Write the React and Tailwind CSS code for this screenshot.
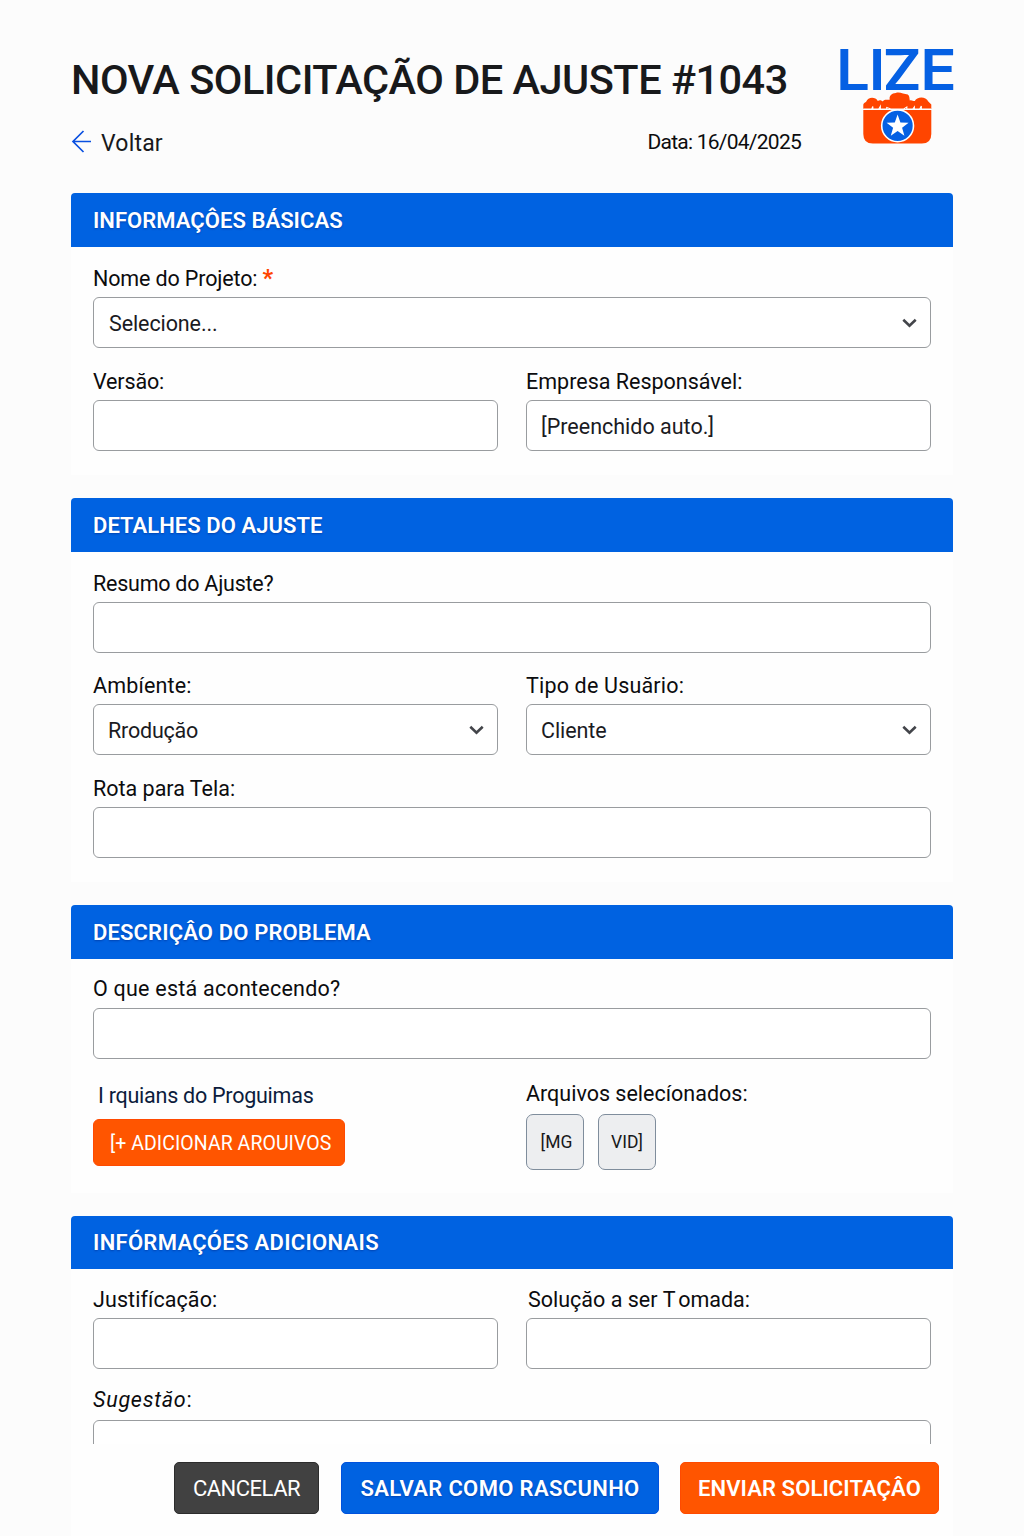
import React from "react";

function Logo() {
  return (
    <svg width="116" height="97" viewBox="0 0 116 97" className="block overflow-visible">
      <text
        x="-1 29.5 42.2 77.2"
        y="41.5"
        transform="scale(1.08 1)"
        fill="#0560e3"
        className="font-['Inter',sans-serif] text-[55.7px] font-semibold"
      >
        LIZE
      </text>
      <g transform="translate(25.8 44)">
        <path
          d="M0.5 17 V12.5 C1 10.5 2.5 11 3.5 9.5 C5 4.5 13 4.5 15 9 C17 7.5 19 8.5 20 9.5 C22 6.5 25 8.5 27 7.5 C26 4 29 1 33 1 C37 -0.5 41 2.5 45 2.5 C47 4 46.5 6 47 8.5 C49 7.5 50.5 9.5 52 9 C54 4.5 63 4 65.5 9.5 L68.5 12.5 V17 Z"
          fill="#ff4500"
        />
        <path d="M0.5 18 H68.5 V42 Q68.5 51.5 59 51.5 H10 Q0.5 51.5 0.5 42 Z" fill="#ff4500" />
        <path
          d="M0.5 17 H9 L10 14.5 V17 H16 L17.5 14.5 V17 H24 V15.5 L28 17 H41 L44 15 V17 H50 L51.5 15 V17 H57 L58.5 14 V17 H68.5"
          fill="none"
          stroke="#fff"
          strokeWidth="1.2"
        />
        <circle cx="34.8" cy="33.8" r="15.9" fill="#0560e3" stroke="#fff" strokeWidth="1.6" />
        <path d="M34.8 22.5 L37.6 30.5 L45.8 30.7 L39.3 35.7 L41.6 43.8 L34.8 39 L28 43.8 L30.3 35.7 L23.8 30.7 L32 30.5 Z" fill="#fff" />
      </g>
    </svg>
  );
}

function Section({ title, titleClass, headClass = "h-[54px]", className, children }) {
  return (
    <section className={`bg-[#fefefe] ${className}`}>
      <h2
        className={`flex items-center rounded-t-[4px] bg-[#0062e1] px-[22px] text-[22px] font-semibold text-white [text-shadow:0_1px_2px_rgba(0,30,120,0.45)] ${headClass}`}
      >
        <span className={titleClass}>{title}</span>
      </h2>
      <div className="px-[22px]">{children}</div>
    </section>
  );
}

function Label({ className = "", color = "text-[#0c0c0e]", leading = "leading-[26px]", children }) {
  return <label className={`block h-6 text-[21.5px] whitespace-nowrap ${leading} ${color} ${className}`}>{children}</label>;
}

function Field({ textClass = "", select, children }) {
  return (
    <div className="flex h-[51px] items-center justify-between rounded-[6px] border border-[#999c9f] bg-white pr-[13px] pl-[14px] text-[21.5px] text-[#1b1b1f]">
      <span className={`pt-[3px] whitespace-nowrap ${textClass}`}>{children}</span>
      {select && (
        <svg width="15" height="10" viewBox="0 0 15 10" className="block">
          <path d="M1.3 1.8 L7.5 7.8 L13.7 1.8" fill="none" stroke="#43454a" strokeWidth="2.6" />
        </svg>
      )}
    </div>
  );
}

export default function App() {
  return (
    <div className="h-[1536px] w-[1024px] overflow-hidden bg-[#fcfcfc] pr-[71px] pl-[71px] font-['Roboto',sans-serif] text-[#18191b]">
      <header className="flex h-[193px] justify-between">
        <div className="w-[730px] pt-[56px]">
          <h1 className="h-12 text-[41.5px] leading-[48px] font-medium tracking-[-0.5px] whitespace-nowrap">
            NOVA SOLICITAÇÃO DE AJUSTE #1043
          </h1>
          <div className="mt-[26px] flex h-6 items-center justify-between">
            <a className="flex items-center gap-[9px] text-[23px] leading-6">
              <svg width="21" height="24" viewBox="0 0 21 24" className="block">
                <path d="M12.5 1 L2 11.5 L12.5 22 M2 11.5 H20" fill="none" stroke="#0a50e0" strokeWidth="1.7" />
              </svg>
              <span className="pt-[3px] tracking-[0.2px]">Voltar</span>
            </a>
            <span className="text-[21px] leading-6 tracking-[-0.75px] text-[#0c0c0e]">Data: 16/04/2025</span>
          </div>
        </div>
        <div className="pt-[48px]">
          <Logo />
        </div>
      </header>

      <main>
        <Section title="INFORMAÇÔES BÁSICAS" titleClass="tracking-[0.04px]" className="h-[282px]">
          <Label className="mt-[19px] mb-[7px] tracking-[-0.14px]">
            Nome do Projeto: <span className="text-[23px] font-extrabold text-[#ff4500]">*</span>
          </Label>
          <Field select textClass="pl-px tracking-[-0.1px]">Selecione...</Field>
          <div className="grid grid-cols-2 gap-x-7 pt-[21px]">
            <div>
              <Label className="mb-[7px] tracking-[-0.15px]">Versăo:</Label>
              <Field />
            </div>
            <div>
              <Label className="mb-[7px]">Empresa Responsável:</Label>
              <Field>[Preenchido auto.]</Field>
            </div>
          </div>
        </Section>

        <Section title="DETALHES DO AJUSTE" titleClass="tracking-[0.05px]" className="mt-[23px] h-[384px]">
          <Label className="mt-[19px] mb-[7px] tracking-[-0.24px]">Resumo do Ajuste?</Label>
          <Field />
          <div className="grid grid-cols-2 gap-x-7 pt-[21px]">
            <div>
              <Label leading="leading-6" className="mb-[6px] tracking-[0.15px]">Ambíente:</Label>
              <Field select textClass="tracking-[-0.2px]">Rroduçăo</Field>
            </div>
            <div>
              <Label leading="leading-6" className="mb-[6px] tracking-[0.18px]">Tipo de Usuărio:</Label>
              <Field select textClass="tracking-[-0.1px]">Cliente</Field>
            </div>
          </div>
          <Label className="mt-[21px] mb-[7px]">Rota para Tela:</Label>
          <Field />
        </Section>

        <Section title="DESCRIÇÂO DO PROBLEMA" titleClass="tracking-[0.14px]" className="mt-[23px] h-[288px]">
          <Label className="mt-[17px] mb-[8px] tracking-[0.23px]">O que está acontecendo?</Label>
          <Field />
          <div className="grid grid-cols-2 gap-x-7">
            <div className="pt-[24px]">
              <Label color="text-[#0c1c3c]" className="ml-[5px] tracking-[-0.25px]">I rquians do Proguimas</Label>
              <button className="mt-[12px] flex h-[47px] w-[252px] items-center rounded-[6px] border border-[#ff4a00] bg-[#ff5500] pt-[2px] pl-[16px] text-[19.5px] tracking-[0.05px] whitespace-nowrap text-white">
                [+ ADICIONAR AROUIVOS
              </button>
            </div>
            <div className="pt-[22px]">
              <Label>Arquivos selecíonados:</Label>
              <div className="mt-[9px] flex gap-[14px] text-[17.5px]">
                <div className="flex h-[56px] w-[58px] items-center justify-center rounded-[7px] border border-[#7f8d9c] bg-[#edeef0] pl-[3px]">[MG</div>
                <div className="flex h-[56px] w-[58px] items-center justify-center rounded-[7px] border border-[#7f8d9c] bg-[#edeef0]">VID]</div>
              </div>
            </div>
          </div>
        </Section>

        <Section title="INFÓRMAÇÓES ADICIONAIS" titleClass="tracking-[0.3px]" headClass="h-[53px]" className="mt-[23px] h-[320px]">
          <div className="grid grid-cols-2 gap-x-7 pt-[18px]">
            <div>
              <Label className="mb-[7px] tracking-[0.08px]">Justifícação:</Label>
              <Field />
            </div>
            <div>
              <Label className="mb-[7px] pl-[2px]">
                Soluçăo a ser <span className="tracking-[2.5px]">T</span>omada:
              </Label>
              <Field />
            </div>
          </div>
          <Label className="mt-[18px] mb-[9px] tracking-[0.75px]">
            <em>Sugestăo</em>:
          </Label>
          <div className="h-[24px] overflow-hidden">
            <Field />
          </div>
          <div className="-mr-2 flex justify-end pt-[18px] text-[22px] text-white">
            <button className="mr-[22px] h-[52px] w-[145px] rounded-[5px] border border-[#2c2c2c] bg-[#414141] pt-px tracking-[-0.5px] whitespace-nowrap">
              CANCELAR
            </button>
            <button className="mr-[21px] h-[52px] w-[318px] rounded-[5px] border border-[#0052dd] bg-[#0062e1] pt-px font-semibold tracking-[0.35px] whitespace-nowrap [text-shadow:0_1px_2px_rgba(0,30,120,0.45)]">
              SALVAR COMO RASCUNHO
            </button>
            <button className="h-[52px] w-[259px] rounded-[5px] border border-[#ff4a00] bg-[#ff5500] pt-px font-semibold tracking-[0.1px] whitespace-nowrap">
              ENVIAR SOLICITAÇÂO
            </button>
          </div>
        </Section>
      </main>
    </div>
  );
}
